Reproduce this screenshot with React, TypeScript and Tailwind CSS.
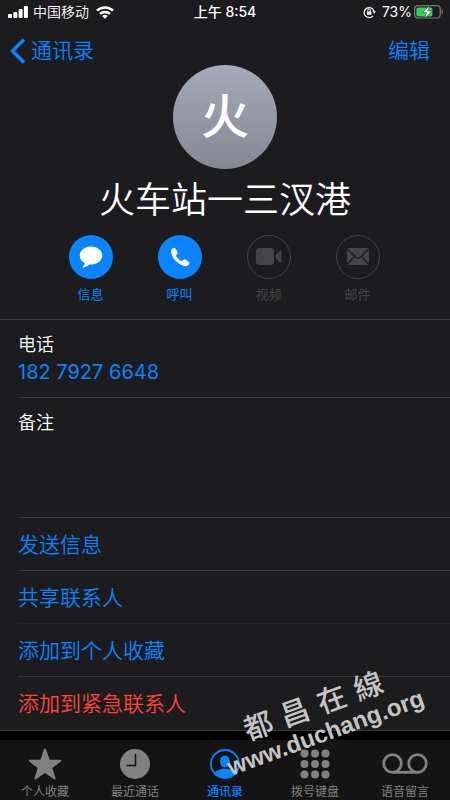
import React from "react";

const font = "font-['Inter','Noto_Sans_CJK_SC',sans-serif]";

const SignalIcon = () => (
  <svg width="20" height="12" viewBox="0 0 20 12" fill="#fff">
    <rect x="0" y="8" width="4" height="4" rx="1" />
    <rect x="5.3" y="6" width="4" height="6" rx="1" />
    <rect x="10.6" y="3" width="4" height="9" rx="1" />
    <rect x="15.9" y="0" width="4" height="12" rx="1" />
  </svg>
);

const WifiIcon = () => (
  <svg width="18" height="13" viewBox="0 0 18 13" fill="none" stroke="#fff" strokeWidth="2.5">
    <path d="M1 4.7a11.5 11.5 0 0 1 16 0" />
    <path d="M4 7.9a7.2 7.2 0 0 1 10 0" />
    <path d="M9 12.8 6.2 10a4 4 0 0 1 5.6 0z" fill="#fff" stroke="none" />
  </svg>
);

const RotationLockIcon = () => (
  <svg width="13" height="14" viewBox="0 0 13 14" fill="none" stroke="#fff">
    <path d="M10 10.8A5 5 0 1 1 11 6.4" strokeWidth="1.2" />
    <path d="M9.3 6.2H13l-1.8 2.6z" fill="#fff" stroke="none" />
    <rect x="4" y="6.4" width="4.4" height="3.4" rx=".5" fill="#fff" stroke="none" />
    <path d="M4.9 6.7V5.3a1.3 1.3 0 0 1 2.6 0v1.4" />
  </svg>
);

const BatteryIcon = () => (
  <svg width="30" height="14" viewBox="0 0 30 14">
    <rect x=".6" y=".6" width="25.6" height="12.4" rx="3.4" fill="none" stroke="#7b7b7d" strokeWidth="1.2" />
    <path d="M27.6 4.6v4.6c1.8-.7 1.8-3.9 0-4.6z" fill="#7b7b7d" />
    <rect x="2.4" y="2.4" width="16" height="9" rx="1.6" fill="#30d158" />
    <path d="M16 .4 8.400 7.600h4.200l-2.400 6.200L18.200 6h-4.400z" fill="#fff" stroke="#1c1c1e" strokeWidth=".5" />
  </svg>
);

const MessageIcon = () => (
  <svg width="24" height="22" viewBox="0 0 24 22" fill="#fff">
    <path d="M12 .5C5.7.5.7 4.500.7 9.600c0 3.200 1.900 5.900 4.900 7.400-.1 1.500-.7 2.700-1.900 3.700-.3.300-.1.800.3.700 2.400-.1 4.600-1.200 6-2.900.6.100 1.300.1 2 .1 6.300 0 11.300-4 11.300-9S18.300.5 12 .5z" />
  </svg>
);

const PhoneIcon = () => (
  <svg width="20" height="20" viewBox="0 0 20 20" fill="#fff">
    <path d="M1 4.500C1 2.800 2.700.8 4 .7c.7 0 1 .4 1.500 1.100l2 3c.5.8.3 1.500-.3 2.200l-.9 1c-.3.300-.3.700 0 1.200.5.900 1.300 1.900 2.200 2.700.900.900 1.700 1.500 2.600 2 .4.200.8.200 1.100-.1l1-.9c.7-.7 1.400-.8 2.200-.3l3 2c.8.6 1.200 1 1.100 1.700-.2 1.300-2.200 2.900-3.900 2.900-2.800 0-6.700-2.200-9.600-5.100C3.100 11.200 1 7.300 1 4.500z" />
  </svg>
);

const VideoIcon = () => (
  <svg width="26" height="18" viewBox="0 0 26 18" fill="#444448">
    <rect x="0" y="0" width="18" height="17" rx="3.5" />
    <path d="M19.5 7.300 23.700 3c.7-.7 1.700-.4 1.700.6v10c0 1-1 1.300-1.700.6l-4.200-4.300z" />
  </svg>
);

const MailIcon = () => (
  <svg width="22" height="18" viewBox="0 0 22 18">
    <rect width="22" height="17" rx="1" fill="#444448" />
    <path d="m0 1 9.500 8.700c1 .9 2 .9 3 0L22 1M0 16.500l7.700-8.300M22 16.500l-7.700-8.300" fill="none" stroke="#1c1c1e" strokeWidth="1.3" />
  </svg>
);

const StarIcon = () => (
  <svg width="34" height="32" viewBox="0 0 34 32" fill="#818181">
    <path d="M17 .6c.6 0 .9.400 1.100.9l3.500 10.300h10.500c1.200 0 1.500 1.100.6 1.800L24.300 20l3.200 10.100c.3 1.100-.6 1.700-1.500 1.100L17 24.900l-9 6.300c-.9.600-1.800 0-1.500-1.100L9.700 20l-8.400-6.400c-.9-.7-.6-1.800.6-1.800h10.500l3.500-10.300c.2-.5.500-.9 1.100-.9z" />
  </svg>
);

const ClockIcon = () => (
  <svg width="30" height="30" viewBox="0 0 30 30">
    <circle cx="15" cy="15" r="15" fill="#818181" />
    <path d="M15.5 5v11.5h-9" fill="none" stroke="#141414" strokeWidth="1.5" />
  </svg>
);

const ContactIcon = () => (
  <svg width="30" height="30" viewBox="0 0 30 30" fill="#0a84ff">
    <circle cx="15" cy="15" r="14" fill="none" stroke="#0a84ff" strokeWidth="1.8" />
    <ellipse cx="15" cy="12.5" rx="5" ry="6" />
    <path d="M4.2 24.300c2-3 6.300-4.500 10.800-4.500s8.800 1.500 10.800 4.500A15 15 0 0 1 15 29.500a15 15 0 0 1-10.800-5.200z" />
  </svg>
);

const KeypadIcon = () => (
  <svg width="30" height="30" viewBox="0 0 30 30" fill="#818181">
    {[4.5, 15, 25.5].map((y) =>
      [4.5, 15, 25.5].map((x) => <circle key={`${x}-${y}`} cx={x} cy={y} r="4" />)
    )}
  </svg>
);

const VoicemailIcon = () => (
  <svg width="46" height="22" viewBox="0 0 46 22" fill="none" stroke="#818181" strokeWidth="2.8">
    <circle cx="10.5" cy="10.5" r="8.8" />
    <circle cx="35.5" cy="10.5" r="8.8" />
    <path d="M10.5 19.300h25" />
  </svg>
);

const actions = [
  { label: "信息", icon: <MessageIcon />, enabled: true },
  { label: "呼叫", icon: <PhoneIcon />, enabled: true },
  { label: "视频", icon: <VideoIcon />, enabled: false },
  { label: "邮件", icon: <MailIcon />, enabled: false },
];

const rows = [
  { label: "发送信息", style: "text-[#0a84ff] border-[#38383a]" },
  { label: "共享联系人", style: "text-[#0a84ff] border-[#242427]" },
  { label: "添加到个人收藏", style: "text-[#0a84ff] border-[#38383a]" },
  { label: "添加到紧急联系人", style: "text-[#ff453a] border-transparent" },
];

const tabs = [
  { label: "个人收藏", icon: <StarIcon />, active: false },
  { label: "最近通话", icon: <ClockIcon />, active: false },
  { label: "通讯录", icon: <ContactIcon />, active: true },
  { label: "拨号键盘", icon: <KeypadIcon />, active: false },
  { label: "语音留言", icon: <VoicemailIcon />, active: false },
];

const StatusBar = () => (
  <div className="grid grid-cols-3 items-center h-6 px-1.5 text-sm text-white">
    <div className="flex items-center pl-0.5 gap-[5px]">
      <SignalIcon />
      <span className="font-[350]">中国移动</span>
      <span className="ml-0.5">
        <WifiIcon />
      </span>
    </div>
    <div className="text-center font-medium">上午 8:54</div>
    <div className="flex items-center justify-end">
      <RotationLockIcon />
      <span className="ml-1.5 mr-0.5">73%</span>
      <BatteryIcon />
    </div>
  </div>
);

const Watermark = () => (
  <div className="absolute right-7 bottom-13 w-[206px] -rotate-20 text-[#c4c4c4] pointer-events-none select-none">
    <div className="flex gap-2.5 pl-7 font-['Noto_Sans_CJK_TC',sans-serif] text-[29px] leading-9 font-medium">
      <span>都</span>
      <span>昌</span>
      <span>在</span>
      <span>線</span>
    </div>
    <div className="font-['Liberation_Sans',sans-serif] text-2xl leading-7 font-bold">www.duchang.org</div>
  </div>
);

const App = () => {
  return (
    <div className={`${font} relative flex flex-col min-h-screen bg-black overflow-hidden`}>
      <main className="bg-[#1c1c1e] border-b border-[#38383a]">
        <StatusBar />
        <nav className="flex items-center justify-between h-[41px] pt-3 pl-2.5 pr-5 text-[21px] leading-7 font-[350] text-[#0a84ff]">
          <button className="flex items-center gap-[5px]">
            <svg width="16" height="26" viewBox="0 0 16 26" fill="none" stroke="#0a84ff" strokeWidth="3.5">
              <path d="M14 1.500 2.500 13 14 24.500" />
            </svg>
            通讯录
          </button>
          <button>编辑</button>
        </nav>

        <header className="flex flex-col items-center">
          <div className="flex items-center justify-center w-[104px] h-[104px] rounded-full bg-linear-to-b from-[#a5abb9] to-[#858891] text-[48px] leading-none font-medium text-white">
            火
          </div>
          <h1 className="mt-2 text-[36px] leading-[46px] font-[350] text-white">火车站一三汊港</h1>
        </header>

        <div className="flex justify-center gap-[45px] mt-3 pr-0.5 h-[84px]">
          {actions.map((a) => (
            <button
              key={a.label}
              disabled={!a.enabled}
              className={`flex flex-col items-center gap-1 w-11 text-[13px] leading-[22px] ${
                a.enabled ? "text-[#0a84ff]" : "text-[#444448]"
              }`}
            >
              <span
                className={`flex items-center justify-center w-11 h-11 rounded-full ${
                  a.enabled ? "bg-[#0a84ff]" : "border border-[#444448]"
                }`}
              >
                {a.icon}
              </span>
              {a.label}
            </button>
          ))}
        </div>

        <div className="border-t border-[#38383a] pl-[18px]">
          <div className="h-[78px] pt-3 border-b border-[#38383a]">
            <div className="text-lg leading-[26px] font-[350] text-white">电话</div>
            <a href="tel:18279276648" className="block text-xl leading-7 text-[#0a84ff]">
              182 7927 6648
            </a>
          </div>
          <div className="h-[120px] pt-3 border-b border-[#38383a]">
            <div className="text-lg leading-[26px] font-[350] text-white">备注</div>
          </div>
          {rows.map((r) => (
            <button
              key={r.label}
              className={`block w-full pt-3 pb-2.5 border-b text-left text-[21px] leading-[30px] font-[350] ${r.style}`}
            >
              {r.label}
            </button>
          ))}
        </div>
      </main>

      <footer className="grid grid-cols-5 mt-auto h-[60px] bg-[#141414]">
        {tabs.map((t) => (
          <button
            key={t.label}
            className={`flex flex-col items-center pt-2 text-xs leading-6 ${
              t.active ? "text-[#0a84ff] font-medium" : "text-[#818181]"
            }`}
          >
            <span className="flex items-center justify-center h-8">{t.icon}</span>
            {t.label}
          </button>
        ))}
      </footer>

      <Watermark />
    </div>
  );
};

export default App;
